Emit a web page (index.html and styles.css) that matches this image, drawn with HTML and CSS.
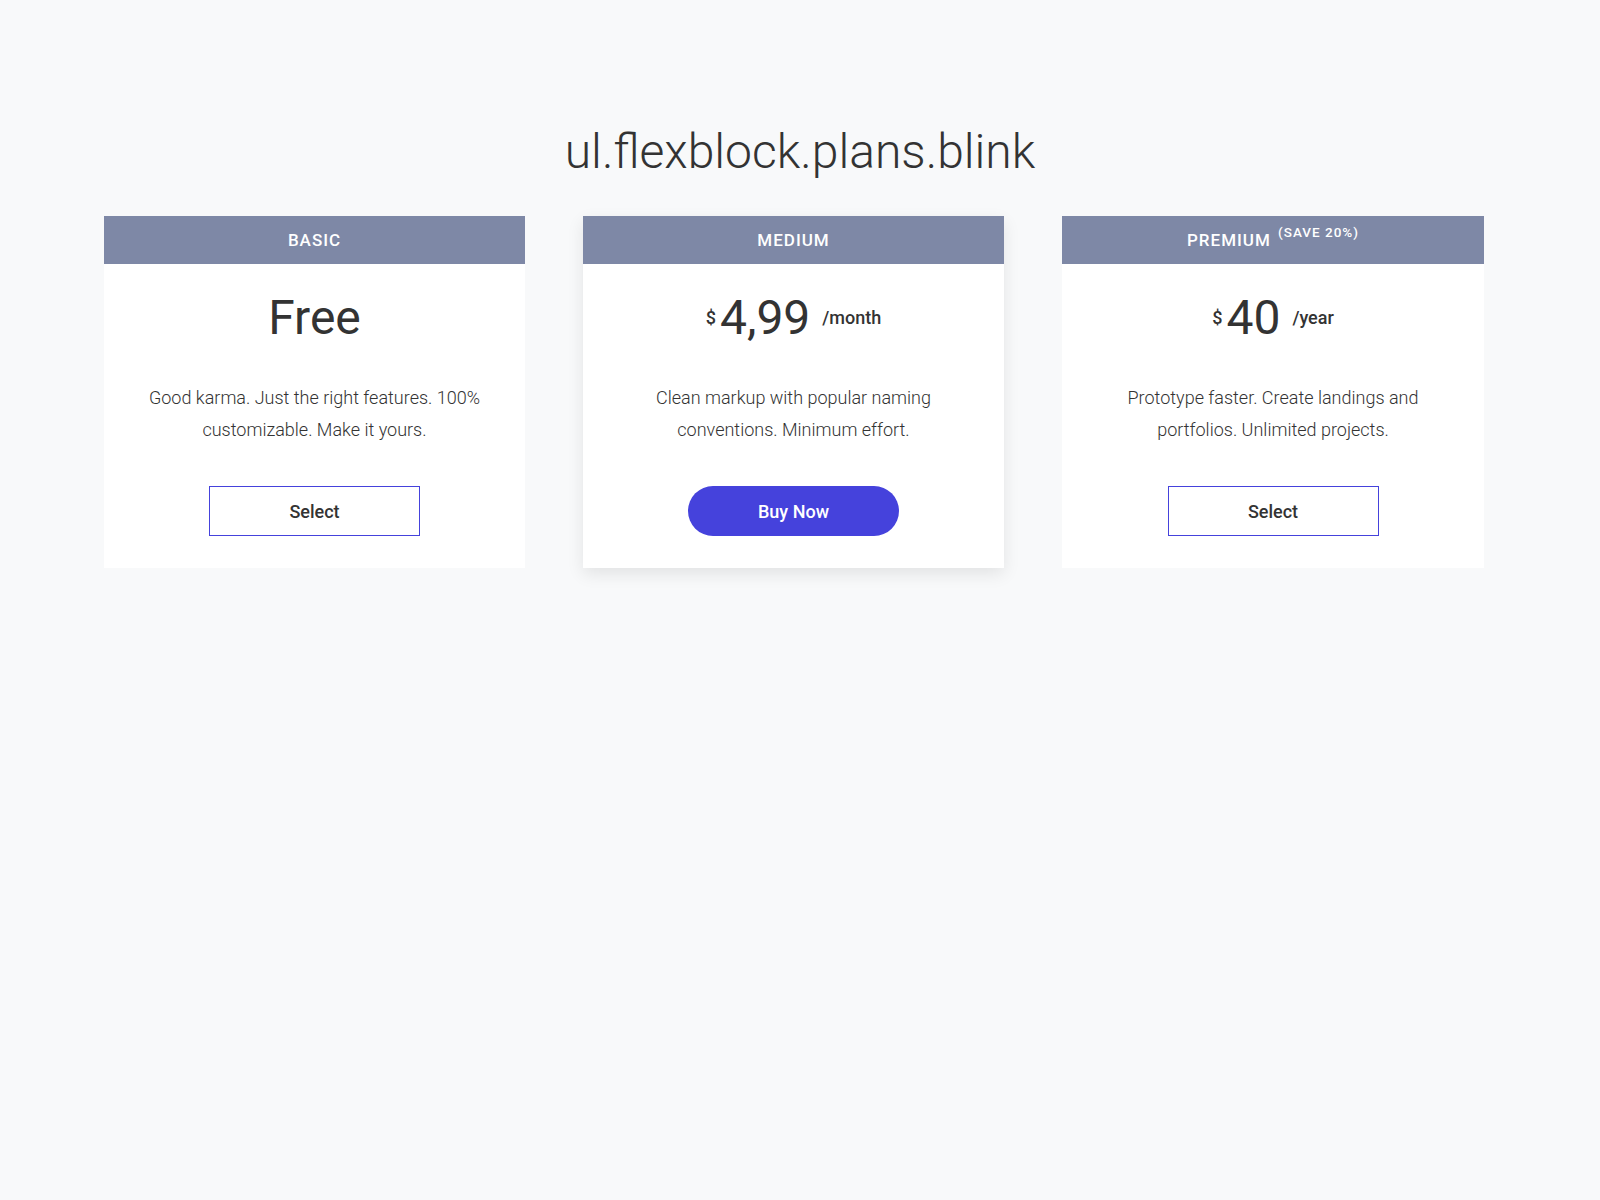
FILE: index.html
```html
<!DOCTYPE html>
<html lang="en">
<head>
<meta charset="utf-8">
<title>Plans</title>
<link rel="stylesheet" href="styles.css">
</head>
<body>
<h1 class="title">ul.flexblock.plans.blink</h1>
<ul class="plans">
  <li class="plan">
    <div class="plan-head">BASIC</div>
    <div class="plan-body">
      <div class="price"><span class="amount">Free</span></div>
      <p class="desc">Good karma. Just the right features. 100% customizable. Make it yours.</p>
      <a class="btn btn-outline" href="#">Select</a>
    </div>
  </li>
  <li class="plan plan-featured">
    <div class="plan-head">MEDIUM</div>
    <div class="plan-body">
      <div class="price"><span class="cur">$</span><span class="amount">4,99</span><span class="per">/month</span></div>
      <p class="desc">Clean markup with popular naming conventions. Minimum effort.</p>
      <a class="btn btn-solid" href="#">Buy Now</a>
    </div>
  </li>
  <li class="plan plan-wide">
    <div class="plan-head">PREMIUM <sup class="save">(SAVE 20%)</sup></div>
    <div class="plan-body">
      <div class="price"><span class="cur">$</span><span class="amount">40</span><span class="per">/year</span></div>
      <p class="desc">Prototype faster. Create landings and portfolios. Unlimited projects.</p>
      <a class="btn btn-outline" href="#">Select</a>
    </div>
  </li>
</ul>
</body>
</html>
```
FILE: styles.css
```css
html, body {
  margin: 0;
  padding: 0;
}
body {
  background: #f8f9fa;
  font-family: Roboto, "Liberation Sans", sans-serif;
  color: #333;
  min-height: 1200px;
}
.title {
  margin: 0;
  padding-top: 122px;
  font-size: 48px;
  font-weight: 300;
  line-height: 60px;
  text-align: center;
  color: #333;
}
.plans {
  list-style: none;
  margin: 34px 0 0 0;
  padding: 0 0 0 104px;
  display: flex;
  gap: 58px;
}
.plan {
  width: 421px;
  background: #fff;
  text-align: center;
}
.plan-wide {
  width: 422px;
}
.plan-featured {
  box-shadow: 0 6px 16px rgba(0, 0, 0, 0.09);
}
.plan-head {
  height: 48px;
  line-height: 48px;
  background: #7e88a6;
  color: #fff;
  font-size: 17px;
  font-weight: 500;
  letter-spacing: 1px;
}
.save {
  font-size: 13.5px;
  position: relative;
  top: -4px;
  vertical-align: top;
  line-height: 40px;
  margin-left: 2px;
}
.plan-body {
  padding: 24px 40px 32px;
  display: flex;
  flex-direction: column;
  align-items: center;
}
.price {
  display: flex;
  align-items: center;
  justify-content: center;
  height: 60px;
  line-height: 60px;
}
.amount {
  font-size: 48px;
  font-weight: 400;
  color: #333;
}
.cur {
  font-size: 18px;
  font-weight: 500;
  line-height: 20px;
  margin-right: 4px;
}
.per {
  font-size: 18px;
  font-weight: 500;
  line-height: 20px;
  margin-left: 12px;
}
.desc {
  margin: 34px 0 0;
  font-size: 18px;
  font-weight: 300;
  line-height: 32px;
  color: #333;
}
.btn {
  margin-top: 40px;
  width: 211px;
  height: 50px;
  box-sizing: border-box;
  display: flex;
  align-items: center;
  justify-content: center;
  font-size: 18px;
  font-weight: 500;
  text-decoration: none;
}
.btn-outline {
  border: 1px solid #4542dc;
  color: #333;
}
.btn-solid {
  background: #4542dc;
  color: #fff;
  border-radius: 25px;
}
```
